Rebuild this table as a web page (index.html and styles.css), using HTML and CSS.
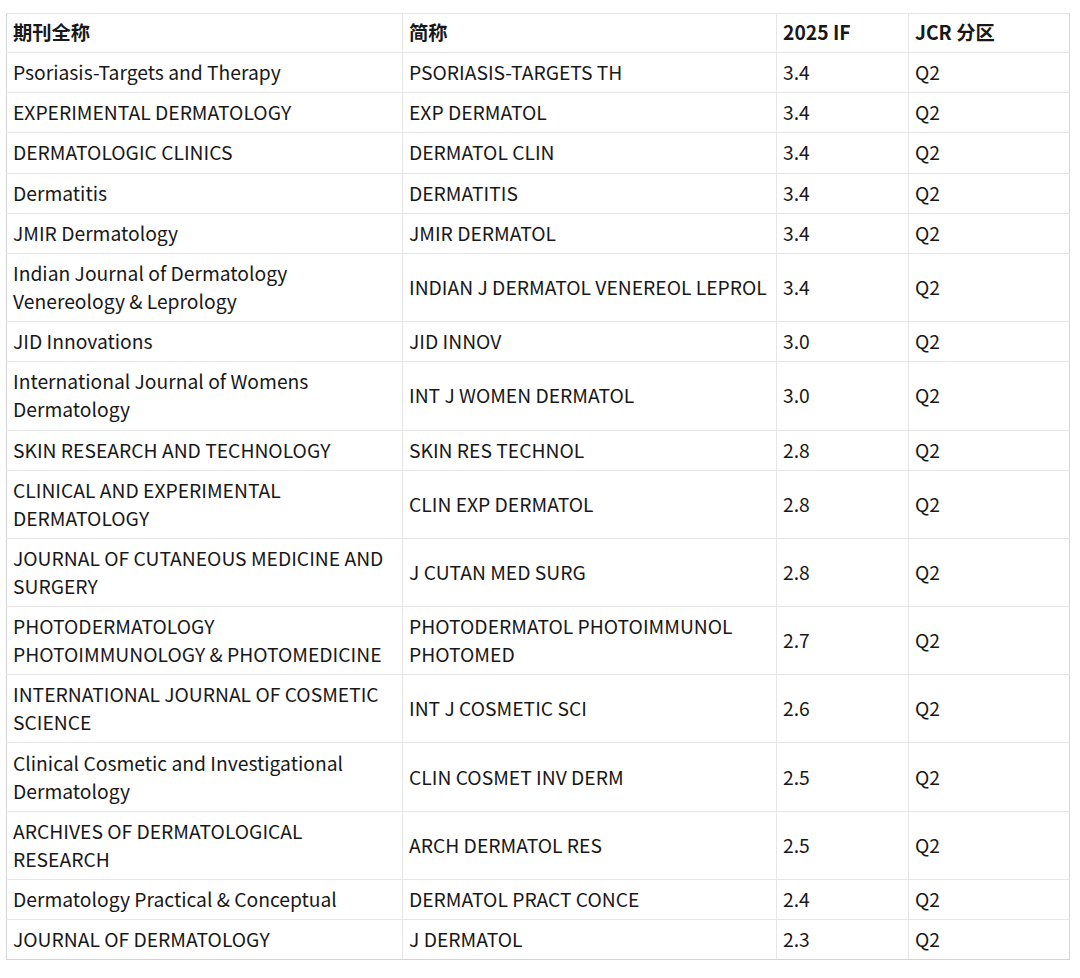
FILE: index.html
```html
<!DOCTYPE html>
<html lang="zh">
<head>
<meta charset="utf-8">
<title>期刊列表</title>
<link rel="stylesheet" href="styles.css">
</head>
<body>
<table class="jtable">
  <colgroup>
    <col class="c1"><col class="c2"><col class="c3"><col class="c4">
  </colgroup>
  <thead>
    <tr><th>期刊全称</th><th>简称</th><th>2025 IF</th><th>JCR 分区</th></tr>
  </thead>
  <tbody>
    <tr><td>Psoriasis-Targets and Therapy</td><td>PSORIASIS-TARGETS TH</td><td>3.4</td><td>Q2</td></tr>
    <tr><td>EXPERIMENTAL DERMATOLOGY</td><td>EXP DERMATOL</td><td>3.4</td><td>Q2</td></tr>
    <tr><td>DERMATOLOGIC CLINICS</td><td>DERMATOL CLIN</td><td>3.4</td><td>Q2</td></tr>
    <tr><td>Dermatitis</td><td>DERMATITIS</td><td>3.4</td><td>Q2</td></tr>
    <tr><td>JMIR Dermatology</td><td>JMIR DERMATOL</td><td>3.4</td><td>Q2</td></tr>
    <tr><td>Indian Journal of Dermatology<br>Venereology &amp; Leprology</td><td>INDIAN J DERMATOL VENEREOL LEPROL</td><td>3.4</td><td>Q2</td></tr>
    <tr><td>JID Innovations</td><td>JID INNOV</td><td>3.0</td><td>Q2</td></tr>
    <tr><td>International Journal of Womens<br>Dermatology</td><td>INT J WOMEN DERMATOL</td><td>3.0</td><td>Q2</td></tr>
    <tr><td>SKIN RESEARCH AND TECHNOLOGY</td><td>SKIN RES TECHNOL</td><td>2.8</td><td>Q2</td></tr>
    <tr><td>CLINICAL AND EXPERIMENTAL<br>DERMATOLOGY</td><td>CLIN EXP DERMATOL</td><td>2.8</td><td>Q2</td></tr>
    <tr><td>JOURNAL OF CUTANEOUS MEDICINE AND<br>SURGERY</td><td>J CUTAN MED SURG</td><td>2.8</td><td>Q2</td></tr>
    <tr><td>PHOTODERMATOLOGY<br>PHOTOIMMUNOLOGY &amp; PHOTOMEDICINE</td><td>PHOTODERMATOL PHOTOIMMUNOL<br>PHOTOMED</td><td>2.7</td><td>Q2</td></tr>
    <tr><td>INTERNATIONAL JOURNAL OF COSMETIC<br>SCIENCE</td><td>INT J COSMETIC SCI</td><td>2.6</td><td>Q2</td></tr>
    <tr><td>Clinical Cosmetic and Investigational<br>Dermatology</td><td>CLIN COSMET INV DERM</td><td>2.5</td><td>Q2</td></tr>
    <tr><td>ARCHIVES OF DERMATOLOGICAL<br>RESEARCH</td><td>ARCH DERMATOL RES</td><td>2.5</td><td>Q2</td></tr>
    <tr><td>Dermatology Practical &amp; Conceptual</td><td>DERMATOL PRACT CONCE</td><td>2.4</td><td>Q2</td></tr>
    <tr><td>JOURNAL OF DERMATOLOGY</td><td>J DERMATOL</td><td>2.3</td><td>Q2</td></tr>
  </tbody>
</table>
</body>
</html>
```

FILE: styles.css
```css
html, body {
  margin: 0;
  padding: 0;
  background: #ffffff;
}
body {
  padding: 13px 12px 0 6px;
  font-family: "Noto Sans CJK SC", "Noto Sans", sans-serif;
  color: #181818;
}
.jtable {
  border-collapse: collapse;
  table-layout: fixed;
  width: 1063px;
  font-size: 19.3px;
  line-height: 28px;
  border: 1px solid #d4d4d4;
  border-top: 1px solid #bcbcbc;
}
.c1 { width: 396px; }
.c2 { width: 374px; }
.c3 { width: 132px; }
.c4 { width: 161px; }
.jtable th,
.jtable td {
  border: 1px solid #e6e6e6;
  padding: 5.1px 5px 6.1px 6px;
  text-align: left;
  vertical-align: middle;
  white-space: nowrap;
}
.jtable th {
  font-weight: 700;
  padding-top: 4px;
  padding-bottom: 6px;
}
.jtable tr > :first-child { border-left-color: #d4d4d4; }
.jtable tr > :last-child { border-right-color: #d4d4d4; }
.jtable tbody tr:last-child td { border-bottom-color: #d4d4d4; }
```
